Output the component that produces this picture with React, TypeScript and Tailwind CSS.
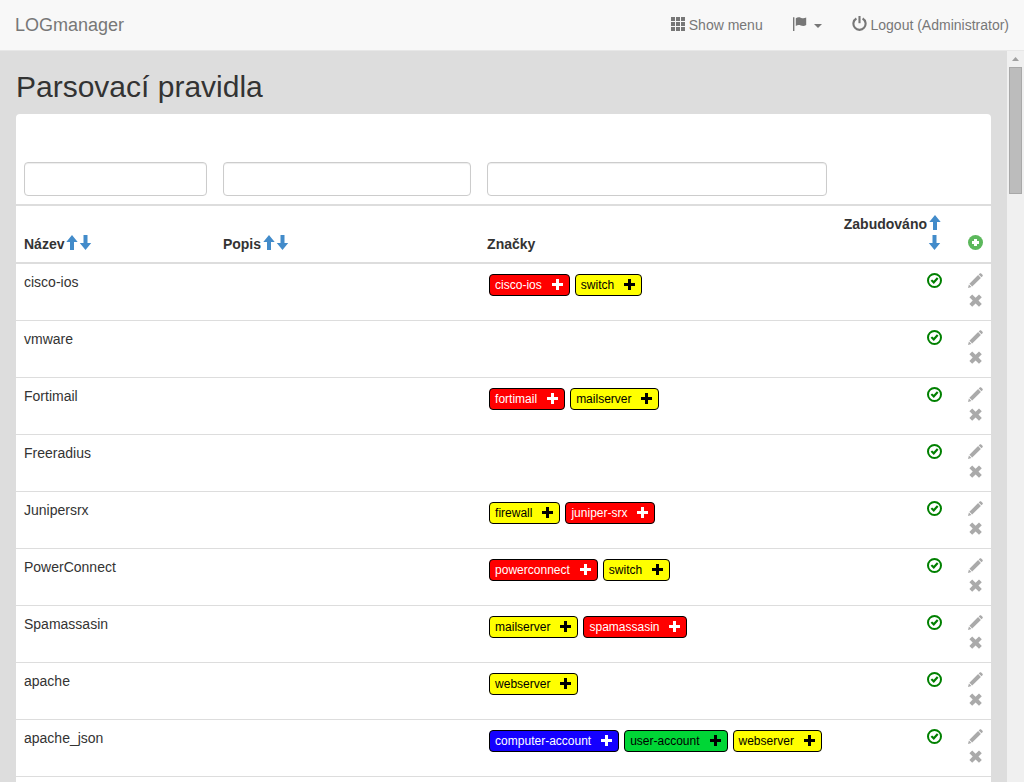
import React from "react";

type Tag = {
  name: string;
  color: "red" | "yellow" | "blue" | "green";
};

type Rule = {
  name: string;
  description: string;
  tags: Tag[];
};

const rules: Rule[] = [
  {
    name: "cisco-ios",
    description: "",
    tags: [
      { name: "cisco-ios", color: "red" },
      { name: "switch", color: "yellow" },
    ],
  },
  { name: "vmware", description: "", tags: [] },
  {
    name: "Fortimail",
    description: "",
    tags: [
      { name: "fortimail", color: "red" },
      { name: "mailserver", color: "yellow" },
    ],
  },
  { name: "Freeradius", description: "", tags: [] },
  {
    name: "Junipersrx",
    description: "",
    tags: [
      { name: "firewall", color: "yellow" },
      { name: "juniper-srx", color: "red" },
    ],
  },
  {
    name: "PowerConnect",
    description: "",
    tags: [
      { name: "powerconnect", color: "red" },
      { name: "switch", color: "yellow" },
    ],
  },
  {
    name: "Spamassasin",
    description: "",
    tags: [
      { name: "mailserver", color: "yellow" },
      { name: "spamassasin", color: "red" },
    ],
  },
  {
    name: "apache",
    description: "",
    tags: [{ name: "webserver", color: "yellow" }],
  },
  {
    name: "apache_json",
    description: "",
    tags: [
      { name: "computer-account", color: "blue" },
      { name: "user-account", color: "green" },
      { name: "webserver", color: "yellow" },
    ],
  },
];

const tagColors = {
  red: "bg-[#ff0000] text-white",
  yellow: "bg-[#ffff00] text-black",
  blue: "bg-[#1400ff] text-white",
  green: "bg-[#00d636] text-black",
};

const iconClass = "inline-block h-[15px] w-[15px] align-[-1px]";

function GridIcon() {
  return (
    <svg viewBox="0 0 14 14" className="inline-block h-3.5 w-3.5 align-[-1px]" fill="currentColor">
      <path d="M0 0h4v4H0zM5 0h4v4H5zM10 0h4v4h-4zM0 5h4v4H0zM5 5h4v4H5zM10 5h4v4h-4zM0 10h4v4H0zM5 10h4v4H5zM10 10h4v4h-4z" />
    </svg>
  );
}

function FlagIcon() {
  return (
    <svg viewBox="0 0 14 14" className="inline-block h-3.5 w-3.5 align-[-1px]" fill="currentColor">
      <path d="M0 .3h1.400V14H0z" />
      <path d="M2.800 1.200C4.500.1 6 0 7.700.7 9.400 1.500 11 1.700 13.200.6V8c-2 1.300-3.800 1-5.500.4C6 7.700 4.500 7.800 2.800 9z" />
    </svg>
  );
}

function PowerIcon() {
  return (
    <svg viewBox="0 0 15 15" className={iconClass} fill="none" stroke="currentColor" strokeWidth="2.1">
      <path d="M4.400 2.500a6.100 6.100 0 1 0 6.200 0" />
      <path d="M7.500 0v7.200" />
    </svg>
  );
}

function ArrowIcon({ down }: { down?: boolean }) {
  return (
    <svg viewBox="0 0 14 15" className="inline-block h-[15px] w-3.5 align-[-1px]" fill="currentColor">
      {down ? (
        <path d="M6.500 15 .8 8H4.500V0h4v8h3.700z" />
      ) : (
        <path d="M7 0l5.700 7H9v8H5V7H1.300z" />
      )}
    </svg>
  );
}

function AddIcon() {
  return (
    <svg viewBox="0 0 15 15" className={iconClass}>
      <circle cx="7.5" cy="7.5" r="7.5" fill="#5cb85c" />
      <path d="M6 4h3v2h2v3H9v2H6V9H4V6h2z" fill="#fff" />
    </svg>
  );
}

function CheckIcon() {
  return (
    <svg viewBox="0 0 15 15" className={iconClass}>
      <circle cx="7.5" cy="7.5" r="6.5" fill="none" stroke="#008000" strokeWidth="2" />
      <path d="M3.600 7.800l1.500-1.400 1.600 1.300 3.200-3.400 1.600 1.400-4.700 5.200z" fill="#008000" />
    </svg>
  );
}

function PencilIcon() {
  return (
    <svg viewBox="0 0 15 15" className={iconClass} fill="#aaa">
      <path d="M0 15l.9-3.500 2.600 2.600zM1.400 10.800l8.700-8.700 2.800 2.800-8.700 8.700zM10.700 1.500l1-1c.5-.5 1-.5 1.500 0l1.300 1.300c.5.5.5 1 0 1.500l-1 1z" />
    </svg>
  );
}

function RemoveIcon() {
  return (
    <svg viewBox="0 0 15 15" className={iconClass} fill="#aaa">
      <path d="M4.200 1.500l3.400 3.300L11 1.500l2.800 2.800-3.300 3.300 3.300 3.300-2.800 2.800-3.400-3.300-3.400 3.300-2.800-2.800 3.300-3.300-3.300-3.300z" />
    </svg>
  );
}

function PlusIcon() {
  return (
    <svg viewBox="0 0 14 14" className="block h-3.5 w-3.5" fill="currentColor">
      <path d="M6 1h3v4h4v3H9v4H6V8H2V5h4z" />
    </svg>
  );
}

function SortButtons({ column }: { column: string }) {
  return (
    <>
      <button className="ml-px text-[#428bca]" aria-label={`${column} vzestupně`}>
        <ArrowIcon />
      </button>
      <button className="text-[#428bca]" aria-label={`${column} sestupně`}>
        <ArrowIcon down />
      </button>
    </>
  );
}

function TagLabel({ tag }: { tag: Tag }) {
  return (
    <li
      className={`flex h-[22px] items-center gap-2 rounded border border-black px-[5px] text-xs ${tagColors[tag.color]}`}
    >
      {tag.name}
      <button aria-label={`Přidat ${tag.name}`}>
        <PlusIcon />
      </button>
    </li>
  );
}

function FilterInput({ label }: { label: string }) {
  return (
    <input
      type="text"
      aria-label={label}
      className="block h-[34px] w-full rounded border border-[#ccc] bg-white px-3 font-normal shadow-[inset_0_1px_1px_rgba(0,0,0,0.075)]"
    />
  );
}

function Navbar() {
  return (
    <header className="flex shrink-0 items-center justify-between border-b border-[#e7e7e7] bg-[#f8f8f8] text-[#777]">
      <a href="#" className="p-[15px] text-lg leading-5">
        LOGmanager
      </a>
      <nav className="flex">
        <a href="#" className="p-[15px]">
          <GridIcon /> Show menu
        </a>
        <button className="p-[15px]" aria-label="Language">
          <FlagIcon />{" "}
          <svg viewBox="0 0 8 4" className="ml-[3px] inline-block h-1 w-2 align-middle" fill="currentColor">
            <path d="M0 0h8L4 4z" />
          </svg>
        </button>
        <a href="#" className="p-[15px]">
          <PowerIcon /> Logout (Administrator)
        </a>
      </nav>
    </header>
  );
}

function Scrollbar() {
  return (
    <div className="flex w-[17px] shrink-0 flex-col items-center bg-[#f0f0f0]" aria-hidden="true">
      <div className="flex h-4 items-center">
        <svg viewBox="0 0 7 4" className="h-1 w-[7px]" fill="#a0a0a0">
          <path d="M3.500 0 7 4H0z" />
        </svg>
      </div>
      <div className="h-[127px] w-[13px] border border-[#a8a8a8] bg-[#bcbcbc]" />
    </div>
  );
}

function RulesTable({ data }: { data: Rule[] }) {
  return (
    <table className="w-full table-fixed border-separate border-spacing-0 text-left">
      <colgroup>
        <col className="w-[20.4%]" />
        <col className="w-[27.1%]" />
        <col className="w-[36.5%]" />
        <col />
        <col className="w-[41px]" />
      </colgroup>
      <thead>
        <tr>
          <td className="border-b-2 border-[#ddd] p-2">
            <FilterInput label="Název" />
          </td>
          <td className="border-b-2 border-[#ddd] p-2">
            <FilterInput label="Popis" />
          </td>
          <td className="border-b-2 border-[#ddd] p-2">
            <FilterInput label="Značky" />
          </td>
          <td className="border-b-2 border-[#ddd] p-2" colSpan={2}></td>
        </tr>
        <tr className="align-bottom">
          <th className="border-b-2 border-[#ddd] p-2">
            Název
            <SortButtons column="Název" />
          </th>
          <th className="border-b-2 border-[#ddd] p-2">
            Popis
            <SortButtons column="Popis" />
          </th>
          <th className="border-b-2 border-[#ddd] p-2">Značky</th>
          <th className="border-b-2 border-[#ddd] p-2 text-right">
            Zabudováno
            <SortButtons column="Zabudováno" />
          </th>
          <th className="border-b-2 border-[#ddd] p-2 text-right">
            <button aria-label="Přidat pravidlo">
              <AddIcon />
            </button>
          </th>
        </tr>
      </thead>
      <tbody>
        {data.map((rule) => (
          <tr key={rule.name} className="align-top">
            <td className="border-b border-[#ddd] p-2">{rule.name}</td>
            <td className="border-b border-[#ddd] p-2">{rule.description}</td>
            <td className="border-b border-[#ddd] p-2">
              <ul className="flex flex-wrap gap-[5px] px-0.5 pt-0.5">
                {rule.tags.map((tag) => (
                  <TagLabel key={tag.name} tag={tag} />
                ))}
              </ul>
            </td>
            <td className="border-b border-[#ddd] p-2 text-right">
              <CheckIcon />
            </td>
            <td className="border-b border-[#ddd] p-2">
              <div className="flex flex-col items-end">
                <button className="h-5" aria-label={`Upravit ${rule.name}`}>
                  <PencilIcon />
                </button>
                <button className="h-5" aria-label={`Smazat ${rule.name}`}>
                  <RemoveIcon />
                </button>
              </div>
            </td>
          </tr>
        ))}
      </tbody>
    </table>
  );
}

export default function App() {
  return (
    <div className="flex h-screen flex-col overflow-hidden font-['Liberation_Sans',Arial,sans-serif] text-sm leading-5 text-[#333]">
      <Navbar />
      <div className="flex min-h-0 flex-1">
        <main className="min-w-0 flex-1 overflow-hidden bg-[#ddd] px-4 pt-5">
          <h1 className="mb-3 text-3xl leading-[31px]">Parsovací pravidla</h1>
          <div className="rounded bg-white py-10">
            <RulesTable data={rules} />
          </div>
        </main>
        <Scrollbar />
      </div>
    </div>
  );
}
